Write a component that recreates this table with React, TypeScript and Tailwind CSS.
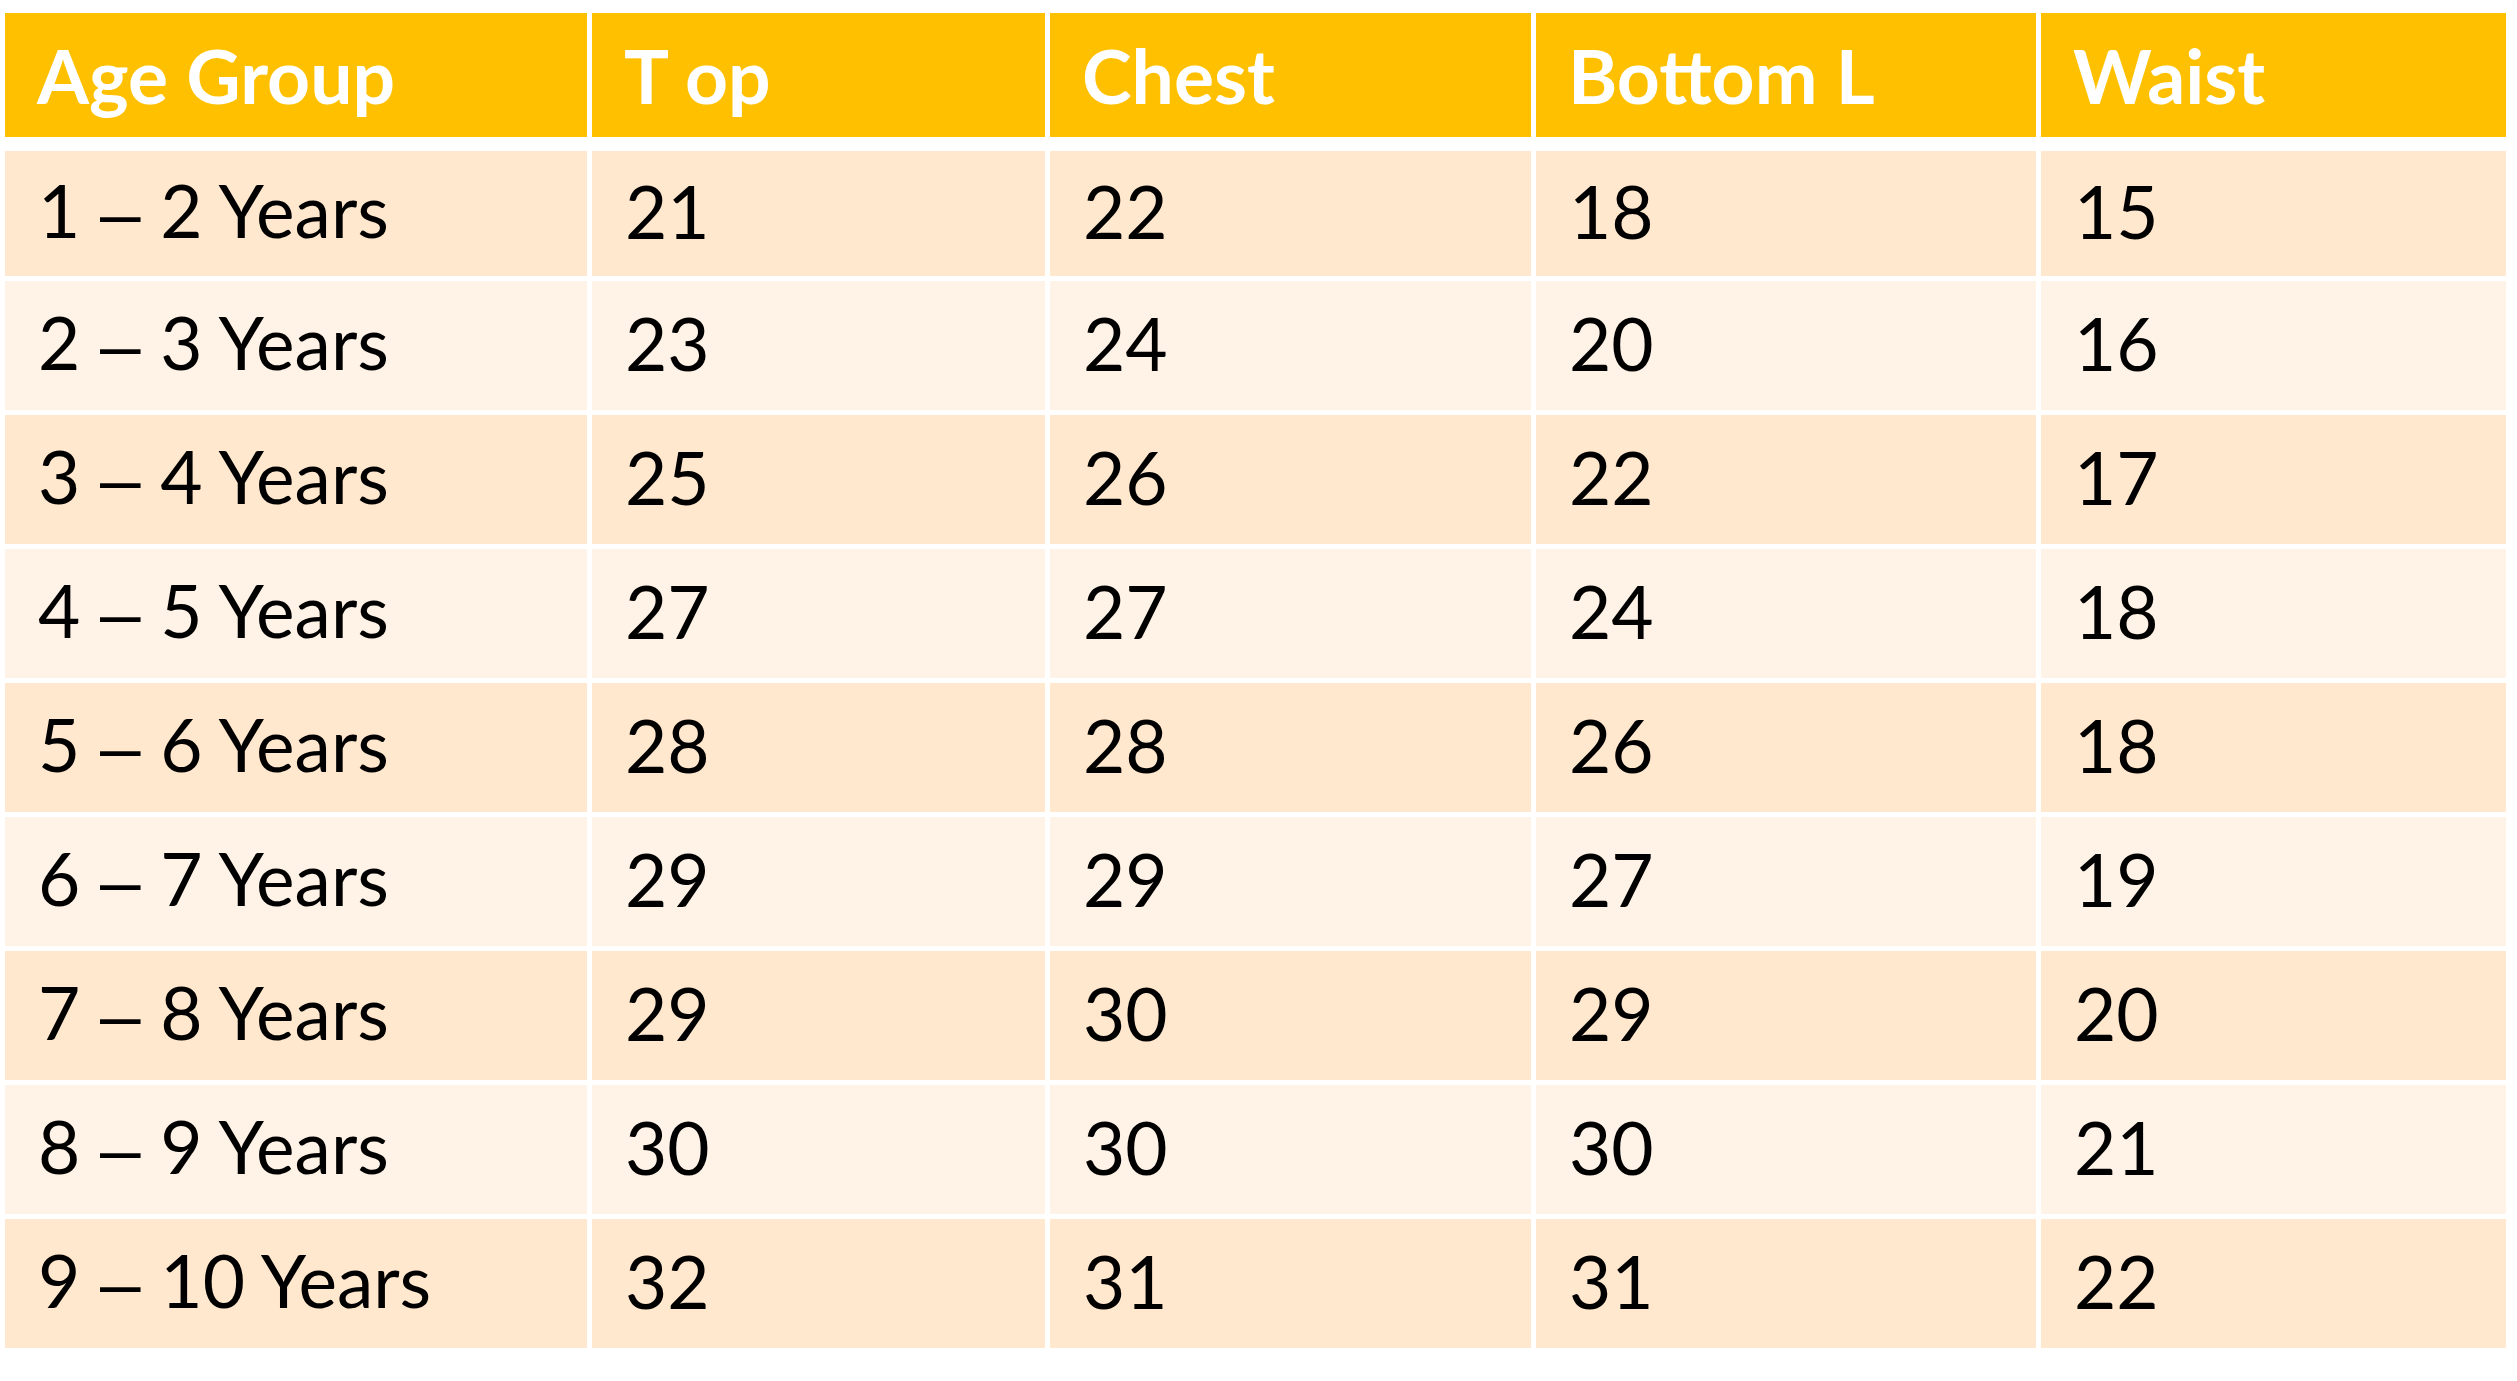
import React from "react";

const headers = ["Age Group", "T op", "Chest", "Bottom L", "Waist"];

const rows: string[][] = [
  ["1 – 2 Years", "21", "22", "18", "15"],
  ["2 – 3 Years", "23", "24", "20", "16"],
  ["3 – 4 Years", "25", "26", "22", "17"],
  ["4 – 5 Years", "27", "27", "24", "18"],
  ["5 – 6 Years", "28", "28", "26", "18"],
  ["6 – 7 Years", "29", "29", "27", "19"],
  ["7 – 8 Years", "29", "30", "29", "20"],
  ["8 – 9 Years", "30", "30", "30", "21"],
  ["9 – 10 Years", "32", "31", "31", "22"],
];

function Cell({ text }: { text: string }) {
  const parts = text.split("–");
  if (parts.length === 1) return <span>{text}</span>;
  return (
    <span>
      {parts[0]}
      <span className="font-['Liberation_Sans',sans-serif] mx-[1px]">–</span>
      {parts[1]}
    </span>
  );
}

export default function App() {
  return (
    <div className="w-[2517px] h-[1381px] bg-white pt-[13px] pl-[5px] font-['Lato','Noto_Sans',sans-serif] overflow-hidden">
      <div className="grid grid-cols-[582px_453px_481px_500px_465px] gap-x-[5px]">
        {headers.map((h) => (
          <div
            key={h}
            className="h-[124px] bg-[#FFC000] flex items-center pl-[32px] text-white font-bold text-[75px] leading-none whitespace-pre"
          >
            <span>{h}</span>
          </div>
        ))}
      </div>
      <div className="mt-[14px] grid grid-cols-[582px_453px_481px_500px_465px] grid-rows-[125px_repeat(8,129px)] gap-x-[5px] gap-y-[5px]">
        {rows.map((r, i) =>
          r.map((c, j) => (
            <div
              key={`${i}-${j}`}
              className={`flex items-center pl-[33px] pb-[4px] text-black text-[73px] leading-none whitespace-pre ${
                i % 2 === 0 ? "bg-[#FFE8CE]" : "bg-[#FFF3E7]"
              }`}
            >
              <Cell text={c} />
            </div>
          ))
        )}
      </div>
    </div>
  );
}
